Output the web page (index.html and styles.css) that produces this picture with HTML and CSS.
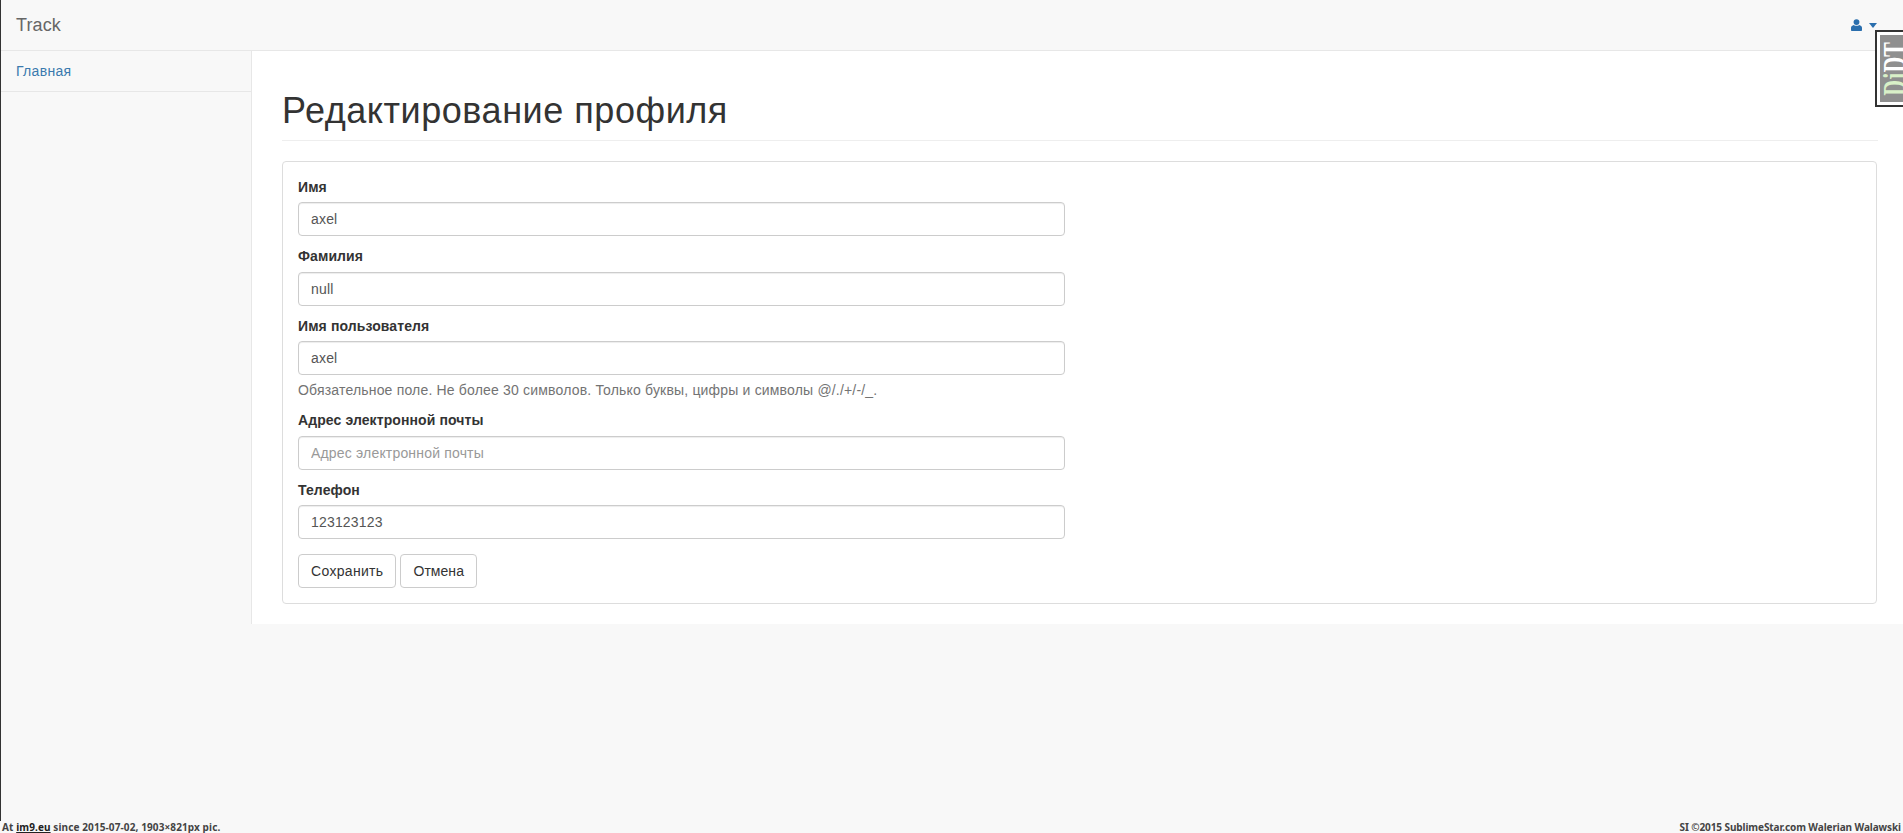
FILE: index.html
```html
<!DOCTYPE html>
<html lang="ru">
<head>
<meta charset="utf-8">
<title>Track</title>
<link rel="stylesheet" href="styles.css">
</head>
<body>
<div class="page">
  <nav class="navbar">
    <a class="brand" href="#">Track</a>
    <a class="user-menu" href="#">
      <svg class="user-icon" viewBox="0 0 12 13" width="11" height="12"><circle cx="6" cy="3.3" r="3.2"/><path d="M0 12.2V9.6c0-1.8 1.500-2.800 3-3.200.8.7 1.800 1 3 1s2.200-.3 3-1c1.500.4 3 1.400 3 3.200v2.600c0 .5-.4.8-.8.8H.8c-.4 0-.8-.3-.8-.8z"/></svg>
      <span class="caret"></span>
    </a>
  </nav>
  <div class="layout">
    <aside class="sidebar">
      <a class="side-link" href="#">Главная</a>
    </aside>
    <main class="main">
      <div class="page-header"><h1>Редактирование профиля</h1></div>
      <form class="panel">
        <div class="field">
          <label class="label" for="f1">Имя</label>
          <input class="input" id="f1" type="text" value="axel">
        </div>
        <div class="field">
          <label class="label" for="f2">Фамилия</label>
          <input class="input" id="f2" type="text" value="null">
        </div>
        <div class="field">
          <label class="label" for="f3">Имя пользователя</label>
          <input class="input" id="f3" type="text" value="axel">
          <p class="help">Обязательное поле. Не более 30 символов. Только буквы, цифры и символы @/./+/-/_.</p>
        </div>
        <div class="field">
          <label class="label" for="f4">Адрес электронной почты</label>
          <input class="input" id="f4" type="text" placeholder="Адрес электронной почты">
        </div>
        <div class="field field-last">
          <label class="label" for="f5">Телефон</label>
          <input class="input" id="f5" type="text" value="123123123">
        </div>
        <div class="actions">
          <button class="btn btn-save" type="button">Сохранить</button>
          <button class="btn btn-cancel" type="button">Отмена</button>
        </div>
      </form>
    </main>
  </div>
</div>
<footer class="credit">
  <span class="credit-left">At <a href="#">im9.eu</a> since 2015-07-02, 1903×821px pic.</span>
  <span class="credit-right">SI ©2015 SublimeStar.com Walerian Walawski</span>
</footer>
<div class="djdt"><div class="djdt-inner"><span class="djdt-text"><span class="dj">Dj</span>DT</span></div></div>
</body>
</html>
```

FILE: styles.css
```css
* { box-sizing: border-box; }
html, body { margin: 0; height: 100%; }
body {
  background: #f8f8f8;
  font: 14px/20px "Liberation Sans", Arial, sans-serif;
  color: #333;
  overflow: hidden;
  display: flex;
  flex-direction: column;
}
a { text-decoration: none; }
.page {
  height: 821px;
  border-left: 1px solid #333;
  display: flex;
  flex-direction: column;
}
.navbar {
  height: 51px;
  flex: none;
  border-bottom: 1px solid #e7e7e7;
  display: flex;
  align-items: center;
  justify-content: space-between;
  padding: 0 26px 0 15px;
}
.brand { font-size: 18px; color: #666; letter-spacing: .1px; }
.user-menu { display: flex; align-items: center; gap: 7px; }
.user-icon { fill: #2a6ead; display: block; }
.caret {
  width: 0; height: 0;
  border-top: 5px solid #2a6ead;
  border-left: 4px solid transparent;
  border-right: 4px solid transparent;
}
.layout { display: flex; align-items: flex-start; }
.sidebar { width: 250px; flex: none; }
.side-link {
  display: block;
  height: 41px;
  padding: 10px 15px;
  border-bottom: 1px solid #e7e7e7;
  color: #3a7aae;
  letter-spacing: .3px;
}
.main {
  flex: 1;
  min-width: 0;
  background: #fff;
  border-left: 1px solid #e7e7e7;
  padding: 0 25px 20px 30px;
  height: 573px;
}
.page-header {
  padding: 38px 0 8px;
  border-bottom: 1px solid #eee;
  margin-bottom: 20px;
}
.page-header h1 {
  margin: 0;
  font-weight: 400;
  font-size: 36px;
  line-height: 43px;
  letter-spacing: .54px;
}
.panel {
  margin-right: 1px;
  border: 1px solid #ddd;
  border-radius: 4px;
  padding: 14.5px 15px 15px;
}
.field { width: 767px; margin-bottom: 10px; }
.field-last { margin-bottom: 15px; }
.label {
  display: block;
  font-weight: 700;
  margin-bottom: 5.5px;
  letter-spacing: .1px;
}
.input {
  display: block;
  width: 100%;
  height: 34px;
  padding: 6px 12px;
  background: #fff;
  border: 1px solid #ccc;
  border-radius: 4px;
  box-shadow: inset 0 1px 1px rgba(0,0,0,.075);
  font: 14px/20px "Liberation Sans", Arial, sans-serif;
  color: #555;
  letter-spacing: .18px;
}
.input::placeholder { color: #999; opacity: 1; }
.help {
  margin: 5px 0 0;
  color: #737373;
  letter-spacing: .18px;
  white-space: nowrap;
}
.actions { display: flex; gap: 4px; }
.btn {
  height: 34px;
  padding: 6px 12px;
  background: #fff;
  border: 1px solid #ccc;
  border-radius: 4px;
  font: 14px/20px "Liberation Sans", Arial, sans-serif;
  color: #333;
}
.btn-save { letter-spacing: .32px; }
.btn-cancel { letter-spacing: .05px; }
.credit {
  flex: none;
  height: 12px;
  display: flex;
  justify-content: space-between;
  padding: 0 2px;
  font: 700 10px/12px "Noto Sans", sans-serif;
  color: #444;
}
.credit-left { letter-spacing: .11px; }
.credit-right { letter-spacing: -.09px; }
.credit a { color: #222; text-decoration: underline; }
.djdt {
  position: absolute;
  top: 30px;
  right: 0;
  width: 28px;
  height: 77px;
  background: #fff;
  border: 2px solid #333;
  border-right: 0;
  padding: 3px 0 3px 3px;
  overflow: hidden;
}
.djdt-inner {
  width: 30px;
  height: 100%;
  background: #8f8f8f;
  display: flex;
  align-items: center;
  justify-content: flex-start;
  overflow: hidden;
}
.djdt-text {
  writing-mode: vertical-rl;
  transform: rotate(180deg) scaleX(1.45);
  transform-origin: center;
  font: 700 22px/22px "Liberation Serif", serif;
  color: #fff;
  white-space: nowrap;
  margin-left: 4px;
}
.dj { color: #d9f0c8; }
```
